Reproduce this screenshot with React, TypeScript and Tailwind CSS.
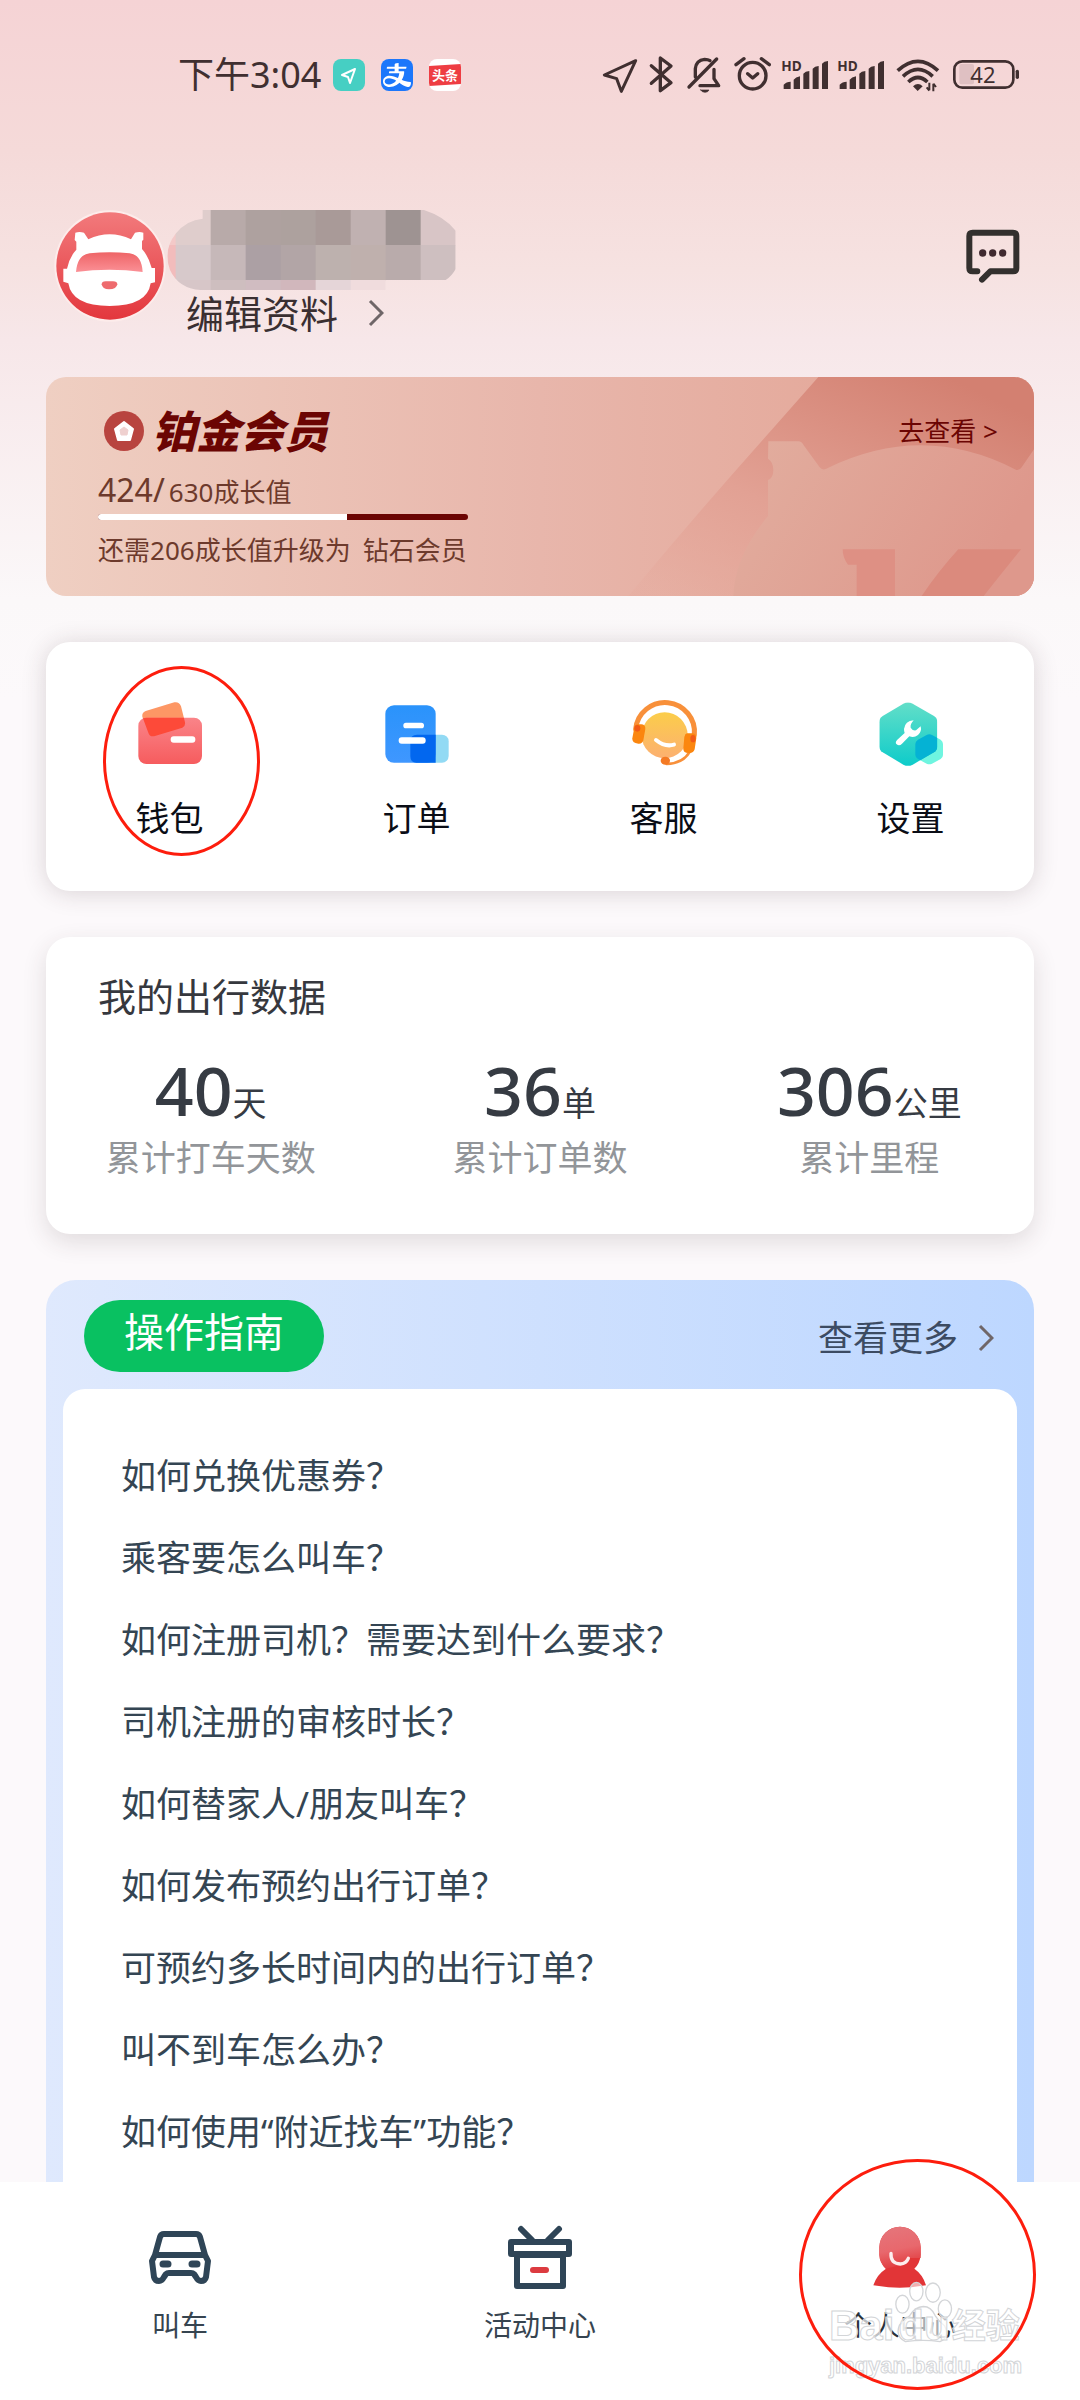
import React, { useState } from 'react';
import { AiOutlineAlipay } from 'react-icons/ai';
import { clsx } from 'clsx';

const GUIDE_QUESTIONS = [
  '如何兑换优惠券？',
  '乘客要怎么叫车？',
  '如何注册司机？需要达到什么要求？',
  '司机注册的审核时长？',
  '如何替家人/朋友叫车？',
  '如何发布预约出行订单？',
  '可预约多长时间内的出行订单？',
  '叫不到车怎么办？',
  '如何使用“附近找车”功能？',
];

const TRIP_STATS = [
  { value: '40', unit: '天', label: '累计打车天数' },
  { value: '36', unit: '单', label: '累计订单数' },
  { value: '306', unit: '公里', label: '累计里程' },
];

const MEMBER = { current: 424, target: 630 };

function SignalIcon() {
  return (
    <svg viewBox="573 45 144 120" className="h-10 w-12" fill="#402f30">
      <text x="574" y="93" fontSize="41" fontWeight="700">HD</text>
      <path d="M581 147v-13q8-9 21-9v22zM611 147v-28q6-8 19-10v38zM640 147v-46q6-8 18-8v54zM668 147V86q6-7 18-8v69zM696 147V71q6-7 18-8v84z" />
    </svg>
  );
}

function StatusBar() {
  return (
    <div className="flex items-center justify-between py-[55px] pl-[178px] pr-[60px] text-[#402f30]">
      <div className="flex items-center gap-4">
        <span className="-mr-1 text-[36px] leading-10">下午3:04</span>
        <span className="flex h-8 w-8 items-center justify-center rounded-lg bg-[#46cfc3]">
          <svg viewBox="0 0 32 32" className="h-8 w-8" fill="none" stroke="#fff" strokeWidth="2" strokeLinejoin="round">
            <path d="M22 10 9 16l6 2 2 6z" />
          </svg>
        </span>
        <span className="flex h-8 w-8 items-center justify-center rounded-lg bg-[#1c77fb] text-white">
          <AiOutlineAlipay className="h-8 w-8" />
        </span>
        <span className="flex h-8 w-8 items-center justify-center overflow-hidden rounded-lg bg-white">
          <svg viewBox="0 0 32 32" className="h-8 w-8">
            <path d="M0 7 32 5v20L0 27z" fill="#ee3d43" />
            <text x="3" y="21" fontSize="13" fontWeight="700" fill="#fff">头条</text>
          </svg>
        </span>
      </div>

      <div className="flex items-center gap-2">
        <svg viewBox="30 45 120 120" className="h-10 w-10" fill="none" stroke="#402f30" strokeWidth="9" strokeLinejoin="round">
          <path d="M137 62 43 105l37 11 14 38z" />
        </svg>
        <svg viewBox="174 45 84 120" className="h-10 w-7" fill="none" stroke="#402f30" strokeWidth="10" strokeLinejoin="round" strokeLinecap="round">
          <path d="M184 77l59 51-32 24V54l32 24-59 52" />
        </svg>
        <svg viewBox="282 45 120 120" className="h-10 w-10" fill="none" stroke="#402f30" strokeWidth="10" strokeLinecap="round" strokeLinejoin="round">
          <path d="M297 141 380 57M316 111V86q2-25 28-28 10 0 16 4M330 137h56l-14-21V88" />
          <path d="M332 150h25q-3 7-12 7t-13-7z" fill="#402f30" strokeWidth="2" />
        </svg>
        <svg viewBox="426 45 123 120" className="h-10 w-[41px]" fill="none" stroke="#402f30" strokeWidth="10" strokeLinecap="round" strokeLinejoin="round">
          <circle cx="488" cy="107" r="40" />
          <path d="m473 101 15 13 15-13M438 74l24-18M538 74l-24-18" />
        </svg>
        <SignalIcon />
        <SignalIcon />
        <svg viewBox="909 45 144 120" className="h-10 w-12" fill="none" stroke="#402f30" strokeWidth="11" strokeLinecap="butt">
          <path d="M923 92q61-56 121 0M939 109q45-42 89 0M955 126q29-27 57 0" />
          <path d="M969 139q15-14 29 0l-15 14z" fill="#402f30" stroke="none" />
          <path d="M1018 128v23M1010 142l8 10M1030 154v-23M1038 141l-8-10" strokeWidth="6" />
        </svg>
        <svg viewBox="1077 45 213 120" className="h-10 w-[71px]">
          <rect x="1108" y="72" width="44" height="61" rx="6" fill="#dfc0c2" />
          <rect x="1093" y="64" width="177" height="79" rx="24" fill="none" stroke="#402f30" strokeWidth="8" />
          <rect x="1277" y="89" width="10" height="28" rx="5" fill="#402f30" />
          <text x="1141" y="129" fontSize="66" fill="#402f30">42</text>
        </svg>
      </div>
    </div>
  );
}

function Chevron() {
  return (
    <svg viewBox="0 0 16 28" className="h-7 w-4" fill="none" stroke="#6f6668" strokeWidth="3">
      <path d="M2 2l12 12L2 26" />
    </svg>
  );
}

function Avatar() {
  return (
    <svg viewBox="44 60 336 336" className="h-28 w-28 shrink-0">
      <defs>
        <linearGradient id="avatar-bg" x1="0" y1="0" x2="0" y2="1">
          <stop offset="0" stopColor="#f27a7c" />
          <stop offset="1" stopColor="#e3373d" />
        </linearGradient>
        <linearGradient id="avatar-visor" x1="0" y1="0" x2="0" y2="1">
          <stop offset="0" stopColor="#ee6466" />
          <stop offset="1" stopColor="#fb9096" />
        </linearGradient>
      </defs>
      <circle cx="212" cy="228" r="167" fill="#fdeceb" />
      <circle cx="212" cy="228" r="161" fill="url(#avatar-bg)" />
      <path
        d="M108 128q12-4 26 0l13 20q64-30 128 0l12-20q14-4 25 0v21l-4 4v24q20 22 29 57h10v43l-13 3q-10 68-123 68T87 280l-15-5v-39h11q8-36 28-57v-24l-5-5z"
        fill="#fff"
      />
      <path d="M110 246q4-52 41-56 60-7 120 0 36 4 39 56-100-14-200 0z" fill="url(#avatar-visor)" />
      <path d="M187 283q0-9 12-9h22q13 0 13 9-2 15-25 15-20 0-22-15z" fill="#ee6b6e" />
    </svg>
  );
}

// hidden nickname, drawn as a grid of colour blocks
function MaskedName() {
  const rows = [
    ['#f3c9c8', '#dfcdcc', '#b8aaa9', '#aea19f', '#ada19e', '#a99a98', '#c0b1b1', '#9e9392', '#d8c5c6'],
    ['#f2bcbc', '#d7c9cb', '#c6b8b9', '#aca0a4', '#b2a5a6', '#bdb1ae', '#bfb0ad', '#b9abab', '#cebfc0'],
    ['#e6c8c9', '#d7c6c8', '#cebebf', '#d0bcc1', '#d1b7bc', '#e5d5d8', '#f0dcdd', '#f6e3e5', '#f6e3e5'],
  ];
  return (
    <svg viewBox="376 60 870 240" className="h-20 w-[290px]">
      <defs>
        <clipPath id="name-mask">
          <path d="M486 60h664q62 20 95 62v115q-12 22-30 33h-180v30H480q-66-4-92-60-22-60 18-110 32-40 80-44z" />
        </clipPath>
      </defs>
      <g clipPath="url(#name-mask)">
        {rows.map((row, y) =>
          row.map((fill, x) => (
            <rect key={`${x}-${y}`} x={300 + x * 105} y={60 + y * 105} width="106" height="106" fill={fill} />
          ))
        )}
      </g>
    </svg>
  );
}

function ProfileHeader() {
  return (
    <header className="flex items-start pl-[54px] pr-[57px] pt-[60px]">
      <Avatar />
      <div className="flex-1">
        <MaskedName />
        <button className="flex items-center gap-[30px] pl-5 text-[38px] leading-[46px] text-[#3a2f31]">
          编辑资料
          <Chevron />
        </button>
      </div>
      <button aria-label="消息" className="mt-4">
        <svg viewBox="70 47 180 180" className="h-[60px] w-[60px]" fill="none" stroke="#33302e" strokeWidth="18" strokeLinecap="round" strokeLinejoin="round">
          <path d="M113 183h-14q-10 0-10-10V77q0-10 10-10h121q10 0 10 10v96q0 10-10 10h-68l-25 25" />
          <g fill="#402a30" stroke="none">
            <circle cx="129" cy="128" r="11" />
            <circle cx="159" cy="128" r="11" />
            <circle cx="189" cy="128" r="11" />
          </g>
        </svg>
      </button>
    </header>
  );
}

function MemberCard() {
  return (
    <section className="relative overflow-hidden rounded-[20px] bg-linear-to-r from-[#efcfc2] via-[#e8b6ab] via-50% to-[#e2a292] pb-7 pl-[52px] pr-9 pt-[30px]">
      <svg viewBox="0 21 1482 657" className="absolute right-0 top-0 h-full w-[494px]" preserveAspectRatio="xMaxYMid slice">
        <defs>
          <linearGradient id="member-slope" x1="0.1" y1="1" x2="0.9" y2="0.1">
            <stop offset="0" stopColor="#e5a699" stopOpacity="0.2" />
            <stop offset="0.4" stopColor="#e2a194" />
            <stop offset="1" stopColor="#d38071" />
          </linearGradient>
          <linearGradient id="member-bear" x1="0" y1="0" x2="1" y2="0.3">
            <stop offset="0" stopColor="#e2ae9f" />
            <stop offset="1" stopColor="#de988c" />
          </linearGradient>
        </defs>
        <path d="M835 21H1482v657H265Q480 420 690 185z" fill="url(#member-slope)" />
        <path
          d="M685 214h90q10 0 16 12l48 66q8 10 20 4 290-142 570 4 10 2 16-8l37-54v440H580q4-120 104-240V330q16-6 16-30t-16-34z"
          fill="url(#member-bear)"
        />
        <path d="M908 538h157v140H950v-94h-26q-16-20-16-46z" fill="#de9084" />
        <path d="M1255 538h188q-60 74-112 140H1145q50-74 110-140z" fill="#db8a7d" />
      </svg>

      <div className="relative">
        <div className="flex h-12 items-center justify-between">
          <div className="flex items-center gap-2 pl-[6px]">
            <svg viewBox="0 0 40 40" className="h-10 w-10">
              <circle cx="20" cy="20" r="20" fill="#b8443f" />
              <path d="M20 11l9 7-3 11H14l-3-11z" fill="#fff" stroke="#fff" strokeWidth="2" strokeLinejoin="round" />
              <path d="M20 16l4 3-1 5h-6l-1-5z" fill="#efd0cf" stroke="#efd0cf" strokeWidth="1" strokeLinejoin="round" />
            </svg>
            <h2 className="text-[44px] font-black italic leading-[48px] text-[#6b0503]">铂金会员</h2>
          </div>
          <a href="#member" className="text-[26px] leading-9 text-[#6b0503]">去查看 &gt;</a>
        </div>

        <p className="mt-4 flex h-[42px] items-baseline gap-1 text-[26px] leading-[38px] text-[#6d3a2c]">
          <span className="text-[32px]">{MEMBER.current}/</span>
          <span>{MEMBER.target}成长值</span>
        </p>
        <div className="mt-px h-[6px] w-[370px] overflow-hidden rounded-full bg-[#6b0503]">
          <div className="h-full bg-white" style={{ width: `${(MEMBER.current / MEMBER.target) * 100}%` }} />
        </div>
        <p className="mt-3 flex gap-3 text-[26px] leading-9 text-[#6d3a2c]">
          <span>还需{MEMBER.target - MEMBER.current}成长值升级为</span>
          <span>钻石会员</span>
        </p>
      </div>
    </section>
  );
}

function WalletIcon() {
  return (
    <svg viewBox="281 172 216 216" className="h-[72px] w-[72px]">
      <defs>
        <linearGradient id="wallet-body" x1="0" y1="0" x2="0" y2="1">
          <stop offset="0" stopColor="#fa8489" />
          <stop offset="1" stopColor="#f65c5e" />
        </linearGradient>
        <clipPath id="wallet-clip">
          <rect x="294" y="234" width="191" height="139" rx="24" />
        </clipPath>
      </defs>
      <path d="M316 214l86-26q14-3 20 12l12 48q2 12-8 16l-82 25q-16 4-20-10l-18-48q-2-12 10-17z" fill="#fd9765" />
      <rect x="294" y="234" width="191" height="139" rx="24" fill="url(#wallet-body)" />
      <path d="M316 214l86-26q14-3 20 12l12 48q2 12-8 16l-82 25q-16 4-20-10l-18-48q-2-12 10-17z" fill="#fd4a39" clipPath="url(#wallet-clip)" />
      <rect x="391" y="290" width="74" height="19" rx="9" fill="#fff" />
    </svg>
  );
}

function OrderIcon() {
  return (
    <svg viewBox="1022 172 216 216" className="h-[72px] w-[72px]">
      <defs>
        <linearGradient id="order-body" x1="0" y1="0" x2="0" y2="1">
          <stop offset="0" stopColor="#2a93fb" />
          <stop offset="1" stopColor="#3f97ff" />
        </linearGradient>
      </defs>
      <rect x="1110" y="285" width="115" height="84" rx="20" fill="#92daf4" />
      <rect x="1035" y="197" width="151" height="172" rx="26" fill="url(#order-body)" />
      <path d="M1110 305q0-20 20-20h56v84h-58q-18 0-18-20z" fill="#0267ef" />
      <rect x="1089" y="249" width="62" height="17" rx="8" fill="#fff" />
      <rect x="1075" y="293" width="81" height="19" rx="9" fill="#fff" />
    </svg>
  );
}

function ServiceIcon() {
  return (
    <svg viewBox="263 172 216 216" className="h-[72px] w-[72px]">
      <defs>
        <linearGradient id="service-face" x1="0" y1="0" x2="0" y2="1">
          <stop offset="0" stopColor="#fbcd4a" />
          <stop offset="1" stopColor="#fcb071" />
        </linearGradient>
      </defs>
      <circle cx="373" cy="287" r="69" fill="url(#service-face)" />
      <g fill="none" stroke="#f8903a" strokeLinecap="round">
        <path d="M286 268a88 88 0 0 1 176 18" strokeWidth="15" />
        <path d="M449 335q-20 36-70 38" strokeWidth="8" />
      </g>
      <path d="M290 254h12q14 0 13 14l-6 34q-3 11-15 10-20-2-18-16l6-32q2-9 8-10z" fill="#fb860f" />
      <path d="M440 281h17q12 2 11 14l-5 34q-3 12-18 11-18 0-16-14l3-34q2-10 8-11z" fill="#fb860f" />
      <ellipse cx="291" cy="266" rx="9" ry="10" fill="#f25a17" />
      <ellipse cx="458" cy="297" rx="8" ry="11" fill="#f25a17" />
      <ellipse cx="375" cy="363" rx="14" ry="12" fill="#f47a24" />
      <path d="M347 301q27 22 54 14" fill="none" stroke="#fff" strokeWidth="12" strokeLinecap="round" />
    </svg>
  );
}

function SettingsIcon() {
  return (
    <svg viewBox="1004 172 216 216" className="h-[72px] w-[72px]">
      <defs>
        <linearGradient id="settings-body" x1="0" y1="0" x2="0" y2="1">
          <stop offset="0" stopColor="#66dfc8" />
          <stop offset="1" stopColor="#0bcbca" />
        </linearGradient>
        <clipPath id="settings-clip">
          <path d="M1089 192q14-7 28 0l64 37q10 6 10 19v72q0 12-10 18l-64 37q-14 7-28 0l-62-37q-10-6-10-18v-72q0-13 10-19z" />
        </clipPath>
      </defs>
      <path d="M1159 286q8-4 16 0l26 14q7 5 7 13v33q0 8-7 12l-26 14q-8 4-16 0l-26-14q-8-4-8-12v-33q0-8 8-13z" fill="#6ff5e0" />
      <g clipPath="url(#settings-clip)">
        <rect x="1010" y="180" width="190" height="205" fill="url(#settings-body)" />
        <path d="M1159 286q8-4 16 0l26 14q7 5 7 13v33q0 8-7 12l-26 14q-8 4-16 0l-26-14q-8-4-8-12v-33q0-8 8-13z" fill="#05b2d4" />
      </g>
      <path
        d="M1120 242q-26 2-29 26 0 8 2 12l-22 20q-8 8-2 14 8 6 16-2l22-22q14 6 26-4 12-10 8-26l-14 12q-10 2-16-8-2-10 9-22z"
        fill="#fff"
      />
    </svg>
  );
}

const SHORTCUTS = [
  { label: '钱包', icon: WalletIcon, circled: true },
  { label: '订单', icon: OrderIcon },
  { label: '客服', icon: ServiceIcon },
  { label: '设置', icon: SettingsIcon },
];

function Shortcuts() {
  return (
    <section className="grid grid-cols-4 rounded-3xl bg-white shadow-[0_2px_24px_rgba(60,40,45,0.18)]">
      {SHORTCUTS.map(({ label, icon: Icon, circled }) => (
        <button key={label} className="relative flex flex-col items-center pb-[49px] pt-[55px]">
          <Icon />
          <span className="mt-[25px] text-[34px] leading-[48px] text-[#0a0d16]">{label}</span>
          {circled && (
            <span className="absolute left-[57px] top-6 h-[190px] w-[157px] rounded-[50%] border-[3px] border-[#fd1d0d]" />
          )}
        </button>
      ))}
    </section>
  );
}

function TripData() {
  return (
    <section className="rounded-3xl bg-white pb-[52px] pt-[35px] shadow-[0_8px_24px_rgba(60,40,45,0.14)]">
      <h3 className="pl-[52px] text-[38px] leading-[48px] text-[#36383e]">我的出行数据</h3>
      <dl className="mt-[30px] grid grid-cols-3">
        {TRIP_STATS.map((item) => (
          <div key={item.label} className="flex flex-col-reverse items-center">
            <dt className="mt-1 text-[35px] leading-[48px] text-[#929599]">{item.label}</dt>
            <dd className="flex h-20 items-baseline text-[#363b43]">
              <span className="text-[68px] font-medium leading-[80px]">{item.value}</span>
              <span className="text-[34px] leading-none">{item.unit}</span>
            </dd>
          </div>
        ))}
      </dl>
    </section>
  );
}

function Guide() {
  return (
    <section className="flex grow flex-col rounded-t-[30px] bg-linear-to-r from-[#dfe9fd] to-[#bdd7ff] px-[17px]">
      <div className="flex items-start justify-between px-[21px] pb-[17px] pt-5">
        <h3 className="h-[72px] rounded-full bg-[#09c161] px-10 text-[40px] leading-[64px] text-white">操作指南</h3>
        <a href="#guide" className="mr-[2px] mt-3 flex items-center gap-5 text-[35px] leading-[52px] text-[#3c4b62]">
          查看更多
          <Chevron />
        </a>
      </div>
      <ul className="grow rounded-t-[22px] bg-white px-[58px] pt-[46px]">
        {GUIDE_QUESTIONS.map((question) => (
          <li key={question}>
            <a href="#guide" className="block text-[35px] leading-[82px] text-[#344553]">{question}</a>
          </li>
        ))}
      </ul>
    </section>
  );
}

function CarIcon() {
  return (
    <svg viewBox="0 0 72 72" className="h-[72px] w-[72px]" fill="none" stroke="#2f4557" strokeWidth="6" strokeLinejoin="round">
      <path d="M20 13h32q3 0 4 3l5 18 3 6-2 16q-1 4-5 4-3 0-5-4l-2-3q-1-1-3-1H25q-2 0-3 1l-2 3q-2 4-5 4-4 0-5-4L8 40l3-6 5-18q1-3 4-3z" />
      <path d="M11 34h50" />
      <path d="M19 43h5M48 43h5" strokeLinecap="round" strokeWidth="7" />
    </svg>
  );
}

function GiftIcon() {
  return (
    <svg viewBox="0 0 72 72" className="h-[72px] w-[72px]" fill="none" stroke="#2f4557" strokeWidth="6" strokeLinejoin="round" strokeLinecap="round">
      <path d="M17 8l11 11M55 8L44 19M7 21h58v12H7zM13 34h46v31H13z" />
      <path d="M29 49h13" stroke="#dc3b40" />
    </svg>
  );
}

function PersonIcon() {
  return (
    <svg viewBox="311 241 216 216" className="h-[72px] w-[72px]">
      <defs>
        <linearGradient id="person-head" x1="0" y1="0" x2="0.2" y2="1">
          <stop offset="0" stopColor="#e5767c" />
          <stop offset="0.6" stopColor="#e8686d" />
          <stop offset="1" stopColor="#e23f42" />
        </linearGradient>
      </defs>
      <path d="M357 320a62 62 0 0 1 124 0v22q-2 26-19 42 26 18 35 50-79 14-158 0 10-32 38-50-19-18-20-42z" fill="#e23537" />
      <path d="M357 320a62 62 0 0 1 124 0v32h-34q-6 20-29 22l-42 10q-18-18-19-42z" fill="url(#person-head)" />
      <path d="M392 338q-2 30 28 32 18-2 24-17" fill="none" stroke="#fff" strokeWidth="10" strokeLinecap="round" strokeOpacity="0.9" />
    </svg>
  );
}

function Watermark() {
  return (
    <div className="pointer-events-none absolute bottom-[18px] left-[109px] font-['Liberation_Sans','Noto_Sans_CJK_SC',sans-serif] font-bold text-white/70 [-webkit-text-stroke:1px_#d3d5d8]">
      <svg viewBox="400 430 180 190" className="absolute left-[65px] top-[-22px] h-[63px] w-[60px]" fill="#fff" fillOpacity="0.6" stroke="#d3d5d8" strokeWidth="4">
        <ellipse cx="425" cy="503" rx="20" ry="27" />
        <ellipse cx="467" cy="465" rx="20" ry="28" />
        <ellipse cx="517" cy="468" rx="22" ry="29" />
        <ellipse cx="553" cy="517" rx="20" ry="27" />
        <path d="M488 510q24 0 36 28 10 16 28 30 18 34-14 48-50-8-104 0-32-16-18-50 20-14 32-30 14-24 40-26z" />
      </svg>
      <div className="flex items-center text-[42px] leading-[48px]">
        <span>Bai</span>
        <span className="relative ml-1 mr-[2px]">du</span>
        <span className="text-[34px]">经验</span>
      </div>
      <div className="text-[22px] leading-8">jingyan.baidu.com</div>
    </div>
  );
}

const TABS = [
  { key: 'ride', label: '叫车', icon: CarIcon },
  { key: 'activity', label: '活动中心', icon: GiftIcon },
  { key: 'me', label: '个人中心', icon: PersonIcon },
];

function BottomNav() {
  const [active, setActive] = useState('me');

  return (
    <nav className="sticky bottom-0 grid grid-cols-3 bg-white">
      {TABS.map(({ key, label, icon: Icon }) => (
        <div key={key} className="relative">
          <button
            onClick={() => setActive(key)}
            className={clsx(
              'flex w-full flex-col items-center pb-[55px] pt-[39px] text-[28px] leading-10',
              active === key ? 'text-[#28323c]' : 'text-[#364450]'
            )}
          >
            <Icon />
            <span className="mt-3">{label}</span>
          </button>
          {key === 'me' && (
            <>
              <Watermark />
              <span className="pointer-events-none absolute left-[79px] top-[-23px] h-[231px] w-[237px] rounded-[50%] border-[3px] border-[#fd1d0d]" />
            </>
          )}
        </div>
      ))}
    </nav>
  );
}

export default function App() {
  return (
    <div className="flex min-h-screen flex-col bg-[#fcf9fb] bg-[linear-gradient(to_bottom,#f5d3d5_0px,#f5dad9_150px,#f6e2e1_270px,#f7e7e9_340px,#fbf8f9_600px,#fcf9fb_700px)] font-['Noto_Sans','Noto_Sans_CJK_SC',sans-serif]">
      <StatusBar />
      <ProfileHeader />
      <main className="mt-[41px] flex grow flex-col gap-[46px] px-[46px]">
        <MemberCard />
        <Shortcuts />
        <TripData />
        <Guide />
      </main>
      <BottomNav />
    </div>
  );
}
